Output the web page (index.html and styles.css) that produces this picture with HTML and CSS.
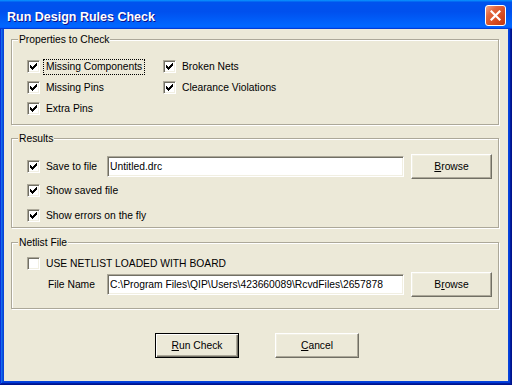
FILE: index.html
```html
<!DOCTYPE html>
<html>
<head>
  <meta charset="UTF-8">
  <title>Run Design Rules Check</title>
  <link rel="stylesheet" href="styles.css">
</head>
<body>
  <div class="window">
    <div class="titlebar">
      <span class="title">Run Design Rules Check</span>
      <span class="close">
        <svg width="11" height="11" viewBox="0 0 11 11"><path d="M1.5 1.5 L9.5 9.5 M9.5 1.5 L1.5 9.5" stroke="#fff" stroke-width="2.2" stroke-linecap="square"/></svg>
      </span>
    </div>
    <div class="client">

      <div class="group">
        <div class="group-title">Properties to Check</div>
        <div class="check-grid">
          <div class="opt"><span class="box"><svg class="tick" width="7" height="7" viewBox="0 0 7 7"><path d="M6 0h1v1h-1z M5 1h2v1h-2z M0 2h1v1h-1z M4 2h3v1h-3z M0 3h2v1h-2z M3 3h3v1h-3z M0 4h5v1h-5z M1 5h3v1h-3z M2 6h1v1h-1z"/></svg></span><span class="label focus">Missing Components</span></div>
          <div class="opt"><span class="box"><svg class="tick" width="7" height="7" viewBox="0 0 7 7"><path d="M6 0h1v1h-1z M5 1h2v1h-2z M0 2h1v1h-1z M4 2h3v1h-3z M0 3h2v1h-2z M3 3h3v1h-3z M0 4h5v1h-5z M1 5h3v1h-3z M2 6h1v1h-1z"/></svg></span><span class="label">Broken Nets</span></div>
          <div class="opt"><span class="box"><svg class="tick" width="7" height="7" viewBox="0 0 7 7"><path d="M6 0h1v1h-1z M5 1h2v1h-2z M0 2h1v1h-1z M4 2h3v1h-3z M0 3h2v1h-2z M3 3h3v1h-3z M0 4h5v1h-5z M1 5h3v1h-3z M2 6h1v1h-1z"/></svg></span><span class="label">Missing Pins</span></div>
          <div class="opt"><span class="box"><svg class="tick" width="7" height="7" viewBox="0 0 7 7"><path d="M6 0h1v1h-1z M5 1h2v1h-2z M0 2h1v1h-1z M4 2h3v1h-3z M0 3h2v1h-2z M3 3h3v1h-3z M0 4h5v1h-5z M1 5h3v1h-3z M2 6h1v1h-1z"/></svg></span><span class="label">Clearance Violations</span></div>
          <div class="opt"><span class="box"><svg class="tick" width="7" height="7" viewBox="0 0 7 7"><path d="M6 0h1v1h-1z M5 1h2v1h-2z M0 2h1v1h-1z M4 2h3v1h-3z M0 3h2v1h-2z M3 3h3v1h-3z M0 4h5v1h-5z M1 5h3v1h-3z M2 6h1v1h-1z"/></svg></span><span class="label">Extra Pins</span></div>
        </div>
      </div>

      <div class="group results">
        <div class="group-title">Results</div>
        <div class="row first">
          <div class="opt"><span class="box"><svg class="tick" width="7" height="7" viewBox="0 0 7 7"><path d="M6 0h1v1h-1z M5 1h2v1h-2z M0 2h1v1h-1z M4 2h3v1h-3z M0 3h2v1h-2z M3 3h3v1h-3z M0 4h5v1h-5z M1 5h3v1h-3z M2 6h1v1h-1z"/></svg></span><span class="label">Save to file</span></div>
          <div class="field">Untitled.drc</div>
          <button class="btn"><u>B</u>rowse</button>
        </div>
        <div class="opt line second"><span class="box"><svg class="tick" width="7" height="7" viewBox="0 0 7 7"><path d="M6 0h1v1h-1z M5 1h2v1h-2z M0 2h1v1h-1z M4 2h3v1h-3z M0 3h2v1h-2z M3 3h3v1h-3z M0 4h5v1h-5z M1 5h3v1h-3z M2 6h1v1h-1z"/></svg></span><span class="label">Show saved file</span></div>
        <div class="opt line third"><span class="box"><svg class="tick" width="7" height="7" viewBox="0 0 7 7"><path d="M6 0h1v1h-1z M5 1h2v1h-2z M0 2h1v1h-1z M4 2h3v1h-3z M0 3h2v1h-2z M3 3h3v1h-3z M0 4h5v1h-5z M1 5h3v1h-3z M2 6h1v1h-1z"/></svg></span><span class="label">Show errors on the fly</span></div>
      </div>

      <div class="group netlist">
        <div class="group-title">Netlist File</div>
        <div class="opt short"><span class="box"></span><span class="label">USE NETLIST LOADED WITH BOARD</span></div>
        <div class="row">
          <div class="field-label">File Name</div>
          <div class="field">C:\Program Files\QIP\Users\423660089\RcvdFiles\2657878</div>
          <button class="btn">B<u>r</u>owse</button>
        </div>
      </div>

      <div class="actions">
        <button class="btn wide default"><u>R</u>un Check</button>
        <button class="btn wide"><u>C</u>ancel</button>
      </div>

    </div>
  </div>
</body>
</html>
```

FILE: styles.css
```css
html, body { margin: 0; padding: 0; }
body {
  width: 512px;
  height: 385px;
  overflow: hidden;
  font-family: "Liberation Sans", Arial, sans-serif;
  font-size: 10.3px;
  color: #000;
}

/* window frame */
.window {
  height: 385px;
  display: flex;
  flex-direction: column;
  background: #0843d9;
  box-shadow: inset -1px -1px #00138c, inset 1px 1px #0831d9, inset -2px -2px #001ea0, inset 2px 2px #166aee, inset -3px -3px #003bda, inset 3px 3px #0855dd;
}
.titlebar {
  height: 29px;
  flex: none;
  box-sizing: border-box;
  padding: 4px 6px 0 7px;
  display: flex;
  align-items: center;
  justify-content: space-between;
  background: linear-gradient(180deg, #0997ff, #0053ee 8%, #0050ee 40%, #06f 88%, #06f 93%, #005bff 95%, #003dd7 96%, #003dd7);
}
.title {
  color: #fff;
  font-size: 12.5px;
  font-weight: bold;
  text-shadow: 1px 1px #0f1089;
}
.close {
  width: 21px;
  height: 21px;
  margin-top: -2px;
  box-sizing: border-box;
  border: 1px solid #fff;
  border-radius: 3px;
  background: linear-gradient(135deg, #f2a68c 0%, #e2683f 30%, #d5481d 70%, #bd3813 100%);
  display: flex;
  align-items: center;
  justify-content: center;
}
.client {
  flex: 1;
  margin: 0 4px 4px;
  background: #ece9d8;
  padding-top: 10px;
}

/* group boxes */
.group {
  margin: 0 9px 0 7px;
  padding: 0 0 0 15px;
  border: 1px solid #aca899;
  box-shadow: inset 1px 1px #fff, 1px 1px #fff;
}
.group-title {
  width: fit-content;
  margin: -7px 0 0 -9px;
  padding: 0 1px;
  line-height: 13px;
  background: #ece9d8;
}
.results { margin-top: 13px; padding-bottom: 1px; }
.netlist { margin-top: 14px; padding-bottom: 11px; }

.check-grid {
  display: grid;
  grid-template-columns: 136px auto;
  grid-auto-rows: 21px;
  margin-top: 10px;
  padding-bottom: 5px;
}

/* checkbox + label */
.opt { display: flex; align-items: center; }
.opt.line { height: 21px; }
.opt.second { margin-top: 1px; }
.opt.third { margin-top: 4px; }
.opt.short { height: 17px; margin-top: 6px; }
.box {
  width: 13px;
  height: 13px;
  flex: none;
  box-sizing: border-box;
  background: #fff;
  border: 1px solid;
  border-color: #aca899 #fff #fff #aca899;
  box-shadow: inset 1px 1px #716f64, inset -1px -1px #f1efe2;
  display: flex;
  align-items: center;
  justify-content: center;
}
.tick { shape-rendering: crispEdges; fill: #000; }
.label {
  margin-left: 3px;
  padding: 0 2px;
  line-height: 14px;
  border: 1px dotted transparent;
  white-space: nowrap;
}
.label.focus { border-color: #000; }

/* field rows */
.row {
  display: grid;
  grid-template-columns: 73px 297px 81px;
  column-gap: 7px;
  align-items: center;
  height: 25px;
}
.row.first { margin-top: 9px; }
.field-label { padding-left: 21px; }
.field {
  height: 21px;
  box-sizing: border-box;
  padding: 0 2px;
  background: #fff;
  border: 1px solid;
  border-color: #aca899 #fff #fff #aca899;
  box-shadow: inset 1px 1px #716f64, inset -1px -1px #f1efe2;
  display: flex;
  align-items: center;
  white-space: nowrap;
  overflow: hidden;
}

/* push buttons */
.btn {
  width: 81px;
  height: 25px;
  box-sizing: border-box;
  padding: 0;
  font: inherit;
  color: #000;
  background: #ece9d8;
  border: 1px solid;
  border-color: #fff #716f64 #716f64 #fff;
  box-shadow: inset -1px -1px #aca899, inset 1px 1px #f1efe2;
}
.btn.wide { width: 84px; }
.btn.default {
  border: 1px solid #000;
  box-shadow: inset 1px 1px #fff, inset -1px -1px #716f64, inset -2px -2px #aca899;
}
.actions {
  display: flex;
  justify-content: center;
  gap: 36px;
  margin-top: 24px;
  padding-left: 2px;
}
```
